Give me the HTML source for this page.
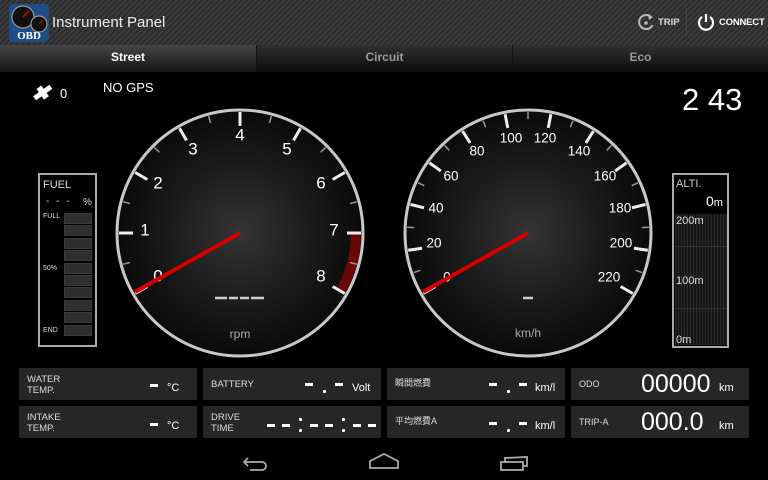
<!DOCTYPE html>
<html><head><meta charset="utf-8"><style>
*{margin:0;padding:0;box-sizing:border-box}
body{width:768px;height:480px;background:#000;overflow:hidden;position:relative;font-family:"Liberation Sans","Noto Sans CJK JP",sans-serif;color:#fff}
.top{position:absolute;left:0;top:0;width:768px;height:45px;background:repeating-linear-gradient(135deg,#3b3b3b 0 2px,#2c2c2c 2px 4px)}
.tabs{position:absolute;left:0;top:45px;width:768px;height:27px;background:linear-gradient(#303030,#0c0c0c)}
.tab{position:absolute;top:0;height:27px;line-height:24px;font-size:12px;font-weight:bold;text-align:center;color:#9a9a9a}
.box{position:absolute;height:32px;background:#262626}
.lbl{position:absolute;left:8px;font-size:9.5px;line-height:11px;color:#ddd}
.abs{position:absolute}
.d{position:absolute;width:8px;height:3px;background:#fff}
.p{position:absolute;width:3px;height:3px;background:#fff;border-radius:1px}
</style></head><body>
<div class="top"></div>
<svg class="abs" style="left:9px;top:4px" width="40" height="38" viewBox="0 0 40 38">
<rect x="0" y="0" width="40" height="38" rx="4" fill="#1d4c86"/>
<circle cx="14" cy="13" r="11" fill="#111" stroke="#999" stroke-width="1.2"/>
<circle cx="30" cy="20" r="8" fill="#111" stroke="#999" stroke-width="1.2"/>
<line x1="14" y1="13" x2="20" y2="7" stroke="#d00" stroke-width="1.5"/>
<line x1="30" y1="20" x2="34" y2="16" stroke="#d00" stroke-width="1.2"/>
<text x="20" y="35" font-size="11" font-weight="bold" text-anchor="middle" fill="#fff" font-family="Liberation Serif">OBD</text>
</svg>
<div class="abs" style="left:52px;top:14px;font-size:15px;color:#eee">Instrument Panel</div>
<svg class="abs" style="left:636px;top:13px" width="20" height="20" viewBox="0 0 20 20"><path d="M15 4 A7 7 0 1 0 16.5 12" fill="none" stroke="#bbb" stroke-width="2"/><path d="M12 2 L17 4 L13 7Z" fill="#bbb"/><circle cx="10" cy="10" r="1.8" fill="#bbb"/></svg>
<div class="abs" style="left:658px;top:17px;font-size:9.5px;font-weight:bold;color:#ddd">TRIP</div>
<div class="abs" style="left:686px;top:8px;width:1px;height:28px;background:#444"></div>
<svg class="abs" style="left:696px;top:12px" width="20" height="20" viewBox="0 0 20 20"><path d="M6 5 A7 7 0 1 0 14 5" fill="none" stroke="#fff" stroke-width="2.2"/><line x1="10" y1="2" x2="10" y2="10" stroke="#fff" stroke-width="2.2"/></svg>
<div class="abs" style="left:719px;top:17px;font-size:9.5px;font-weight:bold;color:#fff;letter-spacing:-0.2px">CONNECT</div>
<div class="tabs">
<div class="tab" style="left:0;width:256px;background:linear-gradient(#454545,#151515);color:#fff">Street</div>
<div class="tab" style="left:256px;width:256px;border-left:1px solid #111">Circuit</div>
<div class="tab" style="left:512px;width:256px;border-left:1px solid #111">Eco</div>
</div>
<svg class="abs" style="left:31px;top:83px" width="24" height="20" viewBox="0 0 24 20"><g transform="rotate(-35 12 10)" fill="#fff"><rect x="2" y="7" width="20" height="5"/><rect x="9" y="3" width="6" height="13"/></g></svg>
<div class="abs" style="left:60px;top:86px;font-size:13px">0</div>
<div class="abs" style="left:103px;top:80px;font-size:13px">NO GPS</div>
<div class="abs" style="left:682px;top:82px;font-size:31px;color:#fff">2 43</div>

<!-- fuel -->
<div class="abs" style="left:38px;top:173px;width:59px;height:174px;border:2px solid #aaa;background:#000"></div>
<div class="abs" style="left:43px;top:179px;font-size:11px;color:#ddd">FUEL</div>
<div class="abs" style="left:46px;top:196px;font-size:10px;color:#ddd;letter-spacing:2px">- - -</div>
<div class="abs" style="left:83px;top:197px;font-size:10px;color:#ddd">%</div>
<div class="abs" style="left:43px;top:213px;font-size:7px;color:#ddd">FULL</div>
<div class="abs" style="left:43px;top:265px;font-size:7px;color:#ddd">50%</div>
<div class="abs" style="left:43px;top:327px;font-size:7px;color:#ddd">END</div>
<div id="fuel"></div>

<!-- alti -->
<div class="abs" style="left:672px;top:173px;width:57px;height:175px;border:2px solid #aaa;background:#000"></div>
<div class="abs" style="left:676px;top:178px;font-size:11px;color:#ccc">ALTI.</div>
<div class="abs" style="left:706px;top:193px;font-size:14px">0<span style="font-size:11px">m</span></div>
<div class="abs" style="left:675px;top:214px;width:52px;height:131px;background:repeating-linear-gradient(90deg,#2a2a2a 0 1px,#161616 1px 3px)"></div>
<div class="abs" style="left:675px;top:246px;width:52px;height:1px;background:#333"></div>
<div class="abs" style="left:675px;top:308px;width:52px;height:1px;background:#333"></div>
<div class="abs" style="left:676px;top:215px;font-size:11px;color:#ddd">200m</div>
<div class="abs" style="left:676px;top:275px;font-size:11px;color:#ddd">100m</div>
<div class="abs" style="left:676px;top:334px;font-size:11px;color:#ddd">0m</div>

<svg class="abs" style="left:0;top:0" width="768" height="480">
<defs><radialGradient id="fg"><stop offset="0" stop-color="#343434"/><stop offset="0.55" stop-color="#1c1c1c"/><stop offset="1" stop-color="#0a0a0a"/></radialGradient></defs>
<circle cx="240" cy="233" r="123" fill="url(#fg)" stroke="#c8c8c8" stroke-width="3"/>
<circle cx="528" cy="233" r="123" fill="url(#fg)" stroke="#c8c8c8" stroke-width="3"/>
<path d="M361 233 A121 121 0 0 1 344.8 293.5 L336.2 288.5 A111 111 0 0 0 351 233Z" fill="#6a0606"/>
<g id="t1" stroke="#eee"></g><g id="t2" stroke="#eee"></g>
<g font-size="17" fill="#fff" text-anchor="middle" dominant-baseline="central">
<text x="158" y="276">0</text><text x="145" y="230">1</text><text x="158" y="183">2</text><text x="193" y="149">3</text><text x="240" y="135">4</text><text x="287" y="149">5</text><text x="321" y="183">6</text><text x="334" y="230">7</text><text x="321" y="276">8</text>
</g>
<g font-size="13.5" fill="#fff" text-anchor="middle" dominant-baseline="central">
<text x="447" y="277">0</text><text x="434" y="243">20</text><text x="436" y="208">40</text><text x="451" y="176">60</text><text x="477" y="151">80</text><text x="511" y="138">100</text><text x="545" y="138">120</text><text x="579" y="151">140</text><text x="605" y="176">160</text><text x="620" y="208">180</text><text x="621" y="243">200</text><text x="609" y="277">220</text>
</g>
<g stroke="#ccc" stroke-width="2.5"><line x1="215" y1="298" x2="227" y2="298"/><line x1="229" y1="298" x2="238" y2="298"/><line x1="240" y1="298" x2="249" y2="298"/><line x1="251" y1="298" x2="264" y2="298"/><line x1="523" y1="298" x2="533" y2="298"/></g>
<text x="240" y="338" font-size="12" fill="#aaa" text-anchor="middle">rpm</text>
<text x="528" y="337" font-size="12" fill="#aaa" text-anchor="middle">km/h</text>
<line x1="240" y1="233" x2="135" y2="292" stroke="#d40000" stroke-width="4"/>
<line x1="528" y1="233" x2="423" y2="292" stroke="#d40000" stroke-width="4"/>
</svg>

<div class="box" style="left:19px;top:368px;width:178px"><div class="lbl" style="top:6px">WATER<br>TEMP.</div><div class="abs" style="left:148px;top:14px;font-size:11px">°C</div></div>
<div class="box" style="left:203px;top:368px;width:178px"><div class="lbl" style="top:11px">BATTERY</div><div class="abs" style="left:149px;top:14px;font-size:11px">Volt</div></div>
<div class="box" style="left:387px;top:368px;width:178px"><div class="lbl" style="top:10px;font-size:9px">瞬間燃費</div><div class="abs" style="left:148px;top:14px;font-size:11px">km/l</div></div>
<div class="box" style="left:571px;top:368px;width:178px"><div class="lbl" style="top:11px;font-size:9px">ODO</div><div class="abs" style="left:70px;top:2px;font-size:25px">00000</div><div class="abs" style="left:148px;top:14px;font-size:11px">km</div></div>
<div class="box" style="left:19px;top:406px;width:178px"><div class="lbl" style="top:6px">INTAKE<br>TEMP.</div><div class="abs" style="left:148px;top:14px;font-size:11px">°C</div></div>
<div class="box" style="left:203px;top:406px;width:178px"><div class="lbl" style="top:6px">DRIVE<br>TIME</div></div>
<div class="box" style="left:387px;top:406px;width:178px"><div class="lbl" style="top:10px;font-size:9px">平均燃費A</div><div class="abs" style="left:148px;top:14px;font-size:11px">km/l</div></div>
<div class="box" style="left:571px;top:406px;width:178px"><div class="lbl" style="top:11px;font-size:9px">TRIP-A</div><div class="abs" style="left:70px;top:2px;font-size:25px">000.0</div><div class="abs" style="left:148px;top:14px;font-size:11px">km</div></div>

<!-- dash values -->
<div class="d" style="left:150px;top:384px"></div>
<div class="d" style="left:150px;top:423px"></div>
<div class="d" style="left:305px;top:383px"></div><div class="p" style="left:323px;top:390px"></div><div class="d" style="left:335px;top:383px"></div>
<div class="d" style="left:489px;top:383px"></div><div class="p" style="left:507px;top:390px"></div><div class="d" style="left:519px;top:383px"></div>
<div class="d" style="left:489px;top:422px"></div><div class="p" style="left:507px;top:429px"></div><div class="d" style="left:519px;top:422px"></div>
<div class="d" style="left:267px;top:424px"></div><div class="d" style="left:282px;top:424px"></div>
<div class="p" style="left:299px;top:418px"></div><div class="p" style="left:299px;top:429px"></div>
<div class="d" style="left:310px;top:424px"></div><div class="d" style="left:325px;top:424px"></div>
<div class="p" style="left:342px;top:418px"></div><div class="p" style="left:342px;top:429px"></div>
<div class="d" style="left:353px;top:424px"></div><div class="d" style="left:368px;top:424px"></div>

<svg class="abs" style="left:0;top:448px" width="768" height="32">
<g fill="none" stroke="#aaa" stroke-width="1.8">
<path d="M248 10 L244 14 L248 18 M244 14 L262 14 A4 4 0 0 1 262 22 L250 22"/>
<path d="M370 20 L370 13 L384 6 L398 13 L398 20Z"/>
<rect x="501" y="14" width="22" height="8"/><path d="M505 14 L505 10 L527 9 L527 18 L523 18"/>
</g></svg>

<script>
var f=document.getElementById('fuel'),h='';
for(var i=0;i<10;i++)h+='<div class="abs" style="left:64px;top:'+(213+i*12.4)+'px;width:28px;height:11px;background:#2e2e2e;border:1px solid #3a3a3a"></div>';
f.innerHTML=h;
function ticks(id,cx,cy,n,sub){var g=document.getElementById(id),s='';var tot=n*sub;
for(var k=0;k<=tot;k++){var a=(210-240*k/tot)*Math.PI/180;var maj=k%sub==0;var r1=121,r2=maj?107:114;
s+='<line x1="'+(cx+r1*Math.cos(a))+'" y1="'+(cy-r1*Math.sin(a))+'" x2="'+(cx+r2*Math.cos(a))+'" y2="'+(cy-r2*Math.sin(a))+'" stroke-width="'+(maj?3:1.5)+'" stroke="'+(maj?'#eee':'#999')+'"/>';}
g.innerHTML=s;}
ticks('t1',240,233,8,2);ticks('t2',528,233,11,2);
</script>
</body></html>
